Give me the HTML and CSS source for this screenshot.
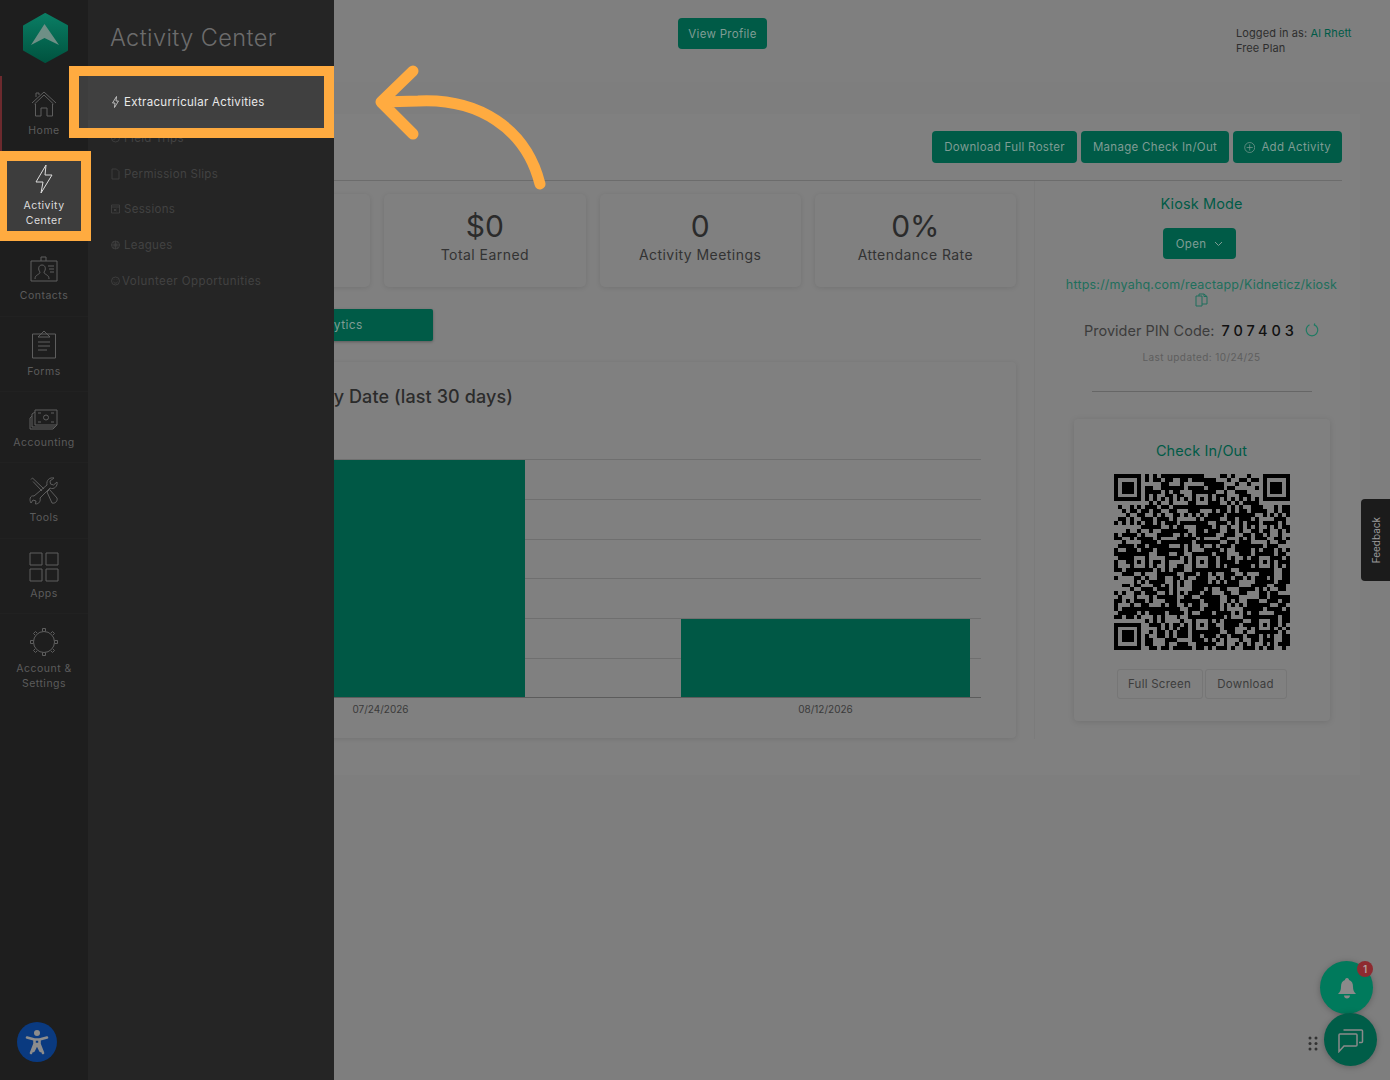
FILE: index.html
```html
<!DOCTYPE html>
<html lang="en">
<head>
    <meta charset="UTF-8">
    <meta name="viewport" content="width=device-width, initial-scale=1.0">
    <title>Activity Center</title>
    <link rel="stylesheet" href="styles.css">
</head>
<body>
    <div class="rail">
        <div class="logo">
            <svg width="46" height="50" viewBox="0 0 46 50">
                <defs>
                    <linearGradient id="logoFill" x1="0" y1="0" x2="0" y2="1">
                        <stop offset="0" stop-color="#0a7d64"/>
                        <stop offset="1" stop-color="#00533f"/>
                    </linearGradient>
                </defs>
                <path d="M23 1 L45 13 V37 L23 49 L2 37 V13 Z" fill="url(#logoFill)" stroke="url(#logoFill)" stroke-width="2" stroke-linejoin="round"/>
                <path d="M22.500 11 L37 32 L22.500 25 L9 32 Z" fill="#6f8f86"/>
            </svg>
        </div>
        <div class="rail-nav">
            <div class="rail-item home-item">
                <svg class="rail-icon" viewBox="0 0 30 30">
                    <path d="M3 14 L15 3 L27 14 M5.500 15 L15 6 L24.500 15 M7 8 V4 H10 V6"/>
                    <path d="M6.500 15 V27 H12 V19 H18 V27 H23.500 V15"/>
                </svg>
                <span>Home</span>
            </div>
            <div class="rail-item active">
                <svg class="rail-icon" viewBox="0 0 30 30">
                    <path d="M17 1 L7 18 H14 L12 29 L23 11 H16 Z"/>
                </svg>
                <span>Activity<br>Center</span>
            </div>
            <div class="rail-item">
                <svg class="rail-icon" viewBox="0 0 30 30">
                    <path d="M2 7 H28 V27 H2 Z M12 7 V3 H17 V7"/>
                    <path d="M6 25 C6 20 11 21 11 18 C9 16 9 11 13 11 C17 11 17 16 15 18 C15 21 20 20 20 25"/>
                    <path d="M19 12 H25 M20 15 H25 M21 18 H25"/>
                </svg>
                <span>Contacts</span>
            </div>
            <div class="rail-item">
                <svg class="rail-icon" viewBox="0 0 30 30">
                    <path d="M3.500 4 H26.500 V28 H3.500 Z"/>
                    <path d="M9 7 L12 4 L15 1 L18 4 L21 7 Z"/>
                    <path d="M9 12 H21 M9 16 H21 M9 20 H18"/>
                </svg>
                <span>Forms</span>
            </div>
            <div class="rail-item tight">
                <svg class="rail-icon" viewBox="0 0 30 30">
                    <path d="M6 6 H28 V21 H6 Z"/>
                    <circle cx="17" cy="13.500" r="2.500"/>
                    <path d="M9 9 H12 M22 9 H25 M9 18 H12 M22 18 H25"/>
                    <path d="M6 8 L3 10 V23 H26 L28 21 M3 12 L1 14 V25 H24 L26 23"/>
                </svg>
                <span>Accounting</span>
            </div>
            <div class="rail-item">
                <svg class="rail-icon" viewBox="0 0 30 30">
                    <path d="M2 3.500 L3.500 2 L15 13 M4 5.500 L13 15"/>
                    <path d="M18 16 L20.500 13.500 L28 22 C29 25 26 28 23 27 Z"/>
                    <path d="M25 2 C21 1 17 4 18 9 L5 20 C1 19 0 24 2 27 L4 24 L7 25 L6.500 28 C10 28 12 25 11 22 L21 12 C25 14 29 10 28 6 L24.500 9 L21.500 8 L21 5 Z"/>
                </svg>
                <span>Tools</span>
            </div>
            <div class="rail-item">
                <svg class="rail-icon" viewBox="0 0 30 30">
                    <path d="M1 1 H13 V13 H1 Z M17 1 H29 V13 H17 Z M1 17 H13 V29 H1 Z M17 17 H29 V29 H17 Z"/>
                </svg>
                <span>Apps</span>
            </div>
            <div class="rail-item">
                <svg class="rail-icon" viewBox="0 0 30 30">
                    <circle cx="15" cy="15" r="10.500"/>
                    <path d="M13.500 4.500 V1.500 H16.500 V4.500 M13.500 25.500 V28.500 H16.500 V25.500 M4.500 13.500 H1.500 V16.500 H4.500 M25.500 13.500 H28.500 V16.500 H25.500"/>
                    <path d="M6 8 L4.500 6.500 L6.500 4.500 L8 6 M24 8 L25.500 6.500 L23.500 4.500 L22 6 M6 22 L4.500 23.500 L6.500 25.500 L8 24 M24 22 L25.500 23.500 L23.500 25.500 L22 24"/>
                </svg>
                <span>Account &amp;<br>Settings</span>
            </div>
        </div>
    </div>

    <div class="main">
        <div class="header">
            <a class="btn profile-btn" href="#">View Profile</a>
            <div class="login">
                Logged in as: <a href="#">Al Rhett</a><br>
                Free Plan
            </div>
        </div>

        <div class="panel">
            <div class="toolbar">
                <a class="btn roster-btn" href="#">Download Full Roster</a>
                <a class="btn manage-btn" href="#">Manage Check In/Out</a>
                <a class="btn add-btn" href="#">
                    <svg width="13" height="13" viewBox="0 0 13 13">
                        <circle cx="6.500" cy="6.500" r="5.700"/>
                        <path d="M6.500 3 V10 M3 6.500 H10"/>
                    </svg>
                    Add Activity
                </a>
            </div>

            <div class="columns">
                <div class="left-col">
                    <div class="stats">
                        <div class="stat"><div class="stat-value">0</div><div class="stat-label">Total Participants</div></div>
                        <div class="stat"><div class="stat-value">$0</div><div class="stat-label">Total Earned</div></div>
                        <div class="stat"><div class="stat-value">0</div><div class="stat-label">Activity Meetings</div></div>
                        <div class="stat"><div class="stat-value">0%</div><div class="stat-label">Attendance Rate</div></div>
                    </div>

                    <div class="tabs">
                        <a class="tab" href="#">Analytics</a>
                    </div>

                    <div class="chart-card">
                        <h3>Attendance By Date (last 30 days)</h3>
                        <svg class="chart" width="847" height="275" viewBox="169 450 847 275">
                            <path class="grid-line" d="M200 459.500 H981 M200 499.500 H981 M200 539.500 H981 M200 578.500 H981 M200 618.500 H981 M200 658.500 H981"/>
                            <rect class="bar" x="236" y="460" width="289" height="237"/>
                            <rect class="bar" x="681" y="619" width="289" height="78"/>
                            <path class="axis-line" d="M200 697.500 H981"/>
                            <text x="380.500" y="713">07/24/2026</text>
                            <text x="825.500" y="713">08/12/2026</text>
                        </svg>
                    </div>
                </div>

                <div class="right-col">
                    <div class="green-title">Kiosk Mode</div>
                    <a class="btn open-btn" href="#">
                        Open
                        <svg width="9" height="6" viewBox="0 0 9 6"><path d="M1 1 L4.500 4.500 L8 1"/></svg>
                    </a>
                    <a class="kiosk-url" href="#">https://myahq.com/reactapp/Kidneticz/kiosk</a>
                    <svg class="copy-icon" width="13" height="14" viewBox="0 0 13 14">
                        <path d="M1 3 H7 V13 H1 Z M4 3 V1 H9 L12 3.500 V11 H7 M9 1 V3.500 H12"/>
                    </svg>
                    <div class="pin-row">
                        <span>Provider PIN Code:</span>
                        <span class="pin">707403</span>
                        <svg width="14" height="14" viewBox="0 0 14 14">
                            <path d="M4.500 1.800 A5.800 5.800 0 1 0 9.500 1.800 M9.800 0.500 L9.300 2 L11 3"/>
                        </svg>
                    </div>
                    <div class="updated">Last updated: 10/24/25</div>
                    <div class="divider"></div>

                    <div class="qr-card">
                        <div class="green-title">Check In/Out</div>
                        <svg class="qr" width="176" height="176" viewBox="0 0 45 45" shape-rendering="crispEdges">
                            <path id="qrPath" fill="#000"/>
                        </svg>
                        <div class="qr-actions">
                            <a class="plain-btn full-btn" href="#">Full Screen</a>
                            <a class="plain-btn dl-btn" href="#">Download</a>
                        </div>
                    </div>
                </div>
            </div>
        </div>
    </div>

    <!-- slide out menu -->
    <div class="side-panel">
        <div class="side-title">Activity Center</div>
        <div class="side-list">
            <div class="side-item active">
                <svg viewBox="0 0 10 12"><path d="M6 0.500 L2 7 H4.500 L4 11.500 L8 5 H5.500 Z"/></svg>
                Extracurricular Activities
            </div>
            <div class="side-item">
                <svg viewBox="0 0 10 12"><circle cx="5" cy="6" r="4"/><path d="M3 8 L7 4"/></svg>
                Field Trips
            </div>
            <div class="side-item">
                <svg viewBox="0 0 10 12"><path d="M1.500 1 H6 L8.500 3.500 V11 H1.500 Z"/></svg>
                Permission Slips
            </div>
            <div class="side-item">
                <svg viewBox="0 0 10 12"><path d="M1 2 H9 V10 H1 Z M1 4 H9 M4 6 V8 M4 7 L6 6 M4 7 L6 8"/></svg>
                Sessions
            </div>
            <div class="side-item">
                <svg viewBox="0 0 10 12"><circle cx="5" cy="6" r="4"/><path d="M1 6 H9 M5 2 V10 M3 2.500 C4 5 4 7 3 9.500 M7 2.500 C6 5 6 7 7 9.500"/></svg>
                Leagues
            </div>
            <div class="side-item volunteer">
                <svg viewBox="0 0 10 12"><circle cx="5" cy="6" r="4"/><path d="M3 7 C4 8.500 6 8.500 7 7 M3.500 4.500 V5 M6.500 4.500 V5"/></svg>
                Volunteer Opportunities
            </div>
        </div>
    </div>

    <div class="rail-marker"></div>
    <div class="access-btn">
        <svg width="26" height="28" viewBox="0 0 26 28">
            <circle cx="13" cy="5" r="3" fill="#8c8c8c" stroke="none"/>
            <path d="M3 9.500 L10.500 11.500 V16 L7 25 M23 9.500 L15.500 11.500 V16 L19 25 M10.500 11.500 H15.500 M10.500 16 H15.500 M13 16 L9.500 23 M13 16 L16.500 23"/>
        </svg>
    </div>

    <div class="feedback"><span>Feedback</span></div>

    <div class="fab bell-fab">
        <svg width="20" height="22" viewBox="0 0 20 22">
            <path d="M10 1 C11.500 1 12 2 12 3 C15 4 16 6.500 16 10 C16 13 17 15 19 17 H1 C3 15 4 13 4 10 C4 6.500 5 4 8 3 C8 2 8.500 1 10 1 Z M7 18.500 H13 C13 20.500 11.500 21.500 10 21.500 C8.500 21.500 7 20.500 7 18.500 Z" fill="#8a8a8a"/>
        </svg>
        <span class="fab-badge">1</span>
    </div>
    <div class="fab chat-fab">
        <svg width="26" height="26" viewBox="0 0 26 26">
            <path d="M1 8 Q1 7 2 7 H18 Q19 7 19 8 V18 Q19 19 18 19 H6 L1 24.500 Z"/>
            <path d="M5.500 3 H23.500 Q24.500 3 24.500 4 V14.500 Q24.500 15.500 23.500 15.500 H21"/>
        </svg>
    </div>
    <svg class="drag-dots" width="10" height="15" viewBox="0 0 10 15">
        <circle cx="2" cy="2" r="1.500"/><circle cx="8" cy="2" r="1.500"/>
        <circle cx="2" cy="7.500" r="1.500"/><circle cx="8" cy="7.500" r="1.500"/>
        <circle cx="2" cy="13" r="1.500"/><circle cx="8" cy="13" r="1.500"/>
    </svg>

    <!-- tutorial annotations -->
    <div class="callout callout-rail"></div>
    <div class="callout callout-menu"></div>
    <svg class="callout-arrow" width="190" height="140" viewBox="360 60 190 140">
        <path d="M540 184 C526 128 478 98 418 101 L381 102 M413 71 L381 102 L413 134"/>
    </svg>

    <script>
        // fills the qr grid: fixed patterns first, then a seeded fill for the data area
        var size = 45;
        var cells = [];
        var fixed = [];
        for (var r = 0; r < size; r++) {
            cells.push([]);
            fixed.push([]);
        }

        function setCell(r, c, on) {
            if (r < 0 || c < 0 || r >= size || c >= size) return;
            cells[r][c] = on;
            fixed[r][c] = true;
        }

        function finder(top, left) {
            for (var r = -1; r <= 7; r++) {
                for (var c = -1; c <= 7; c++) {
                    var ring = r >= 0 && r <= 6 && (c === 0 || c === 6) || c >= 0 && c <= 6 && (r === 0 || r === 6);
                    var core = r >= 2 && r <= 4 && c >= 2 && c <= 4;
                    setCell(top + r, left + c, ring || core);
                }
            }
        }

        function alignment(r0, c0) {
            for (var r = -2; r <= 2; r++) {
                for (var c = -2; c <= 2; c++) {
                    setCell(r0 + r, c0 + c, Math.max(Math.abs(r), Math.abs(c)) !== 1);
                }
            }
        }

        finder(0, 0);
        finder(0, 38);
        finder(38, 0);
        var centers = [6, 22, 38];
        for (var i = 0; i < 3; i++) {
            for (var j = 0; j < 3; j++) {
                if ((i === 0 && j === 0) || (i === 0 && j === 2) || (i === 2 && j === 0)) continue;
                alignment(centers[i], centers[j]);
            }
        }
        for (var t = 8; t < 37; t++) {
            if (!fixed[6][t]) setCell(6, t, t % 2 === 0);
            if (!fixed[t][6]) setCell(t, 6, t % 2 === 0);
        }

        var seed = 707403;
        function next() {
            seed = (seed * 1103515245 + 12345) & 0x7fffffff;
            return (seed >> 12) / 524288;
        }

        var d = '';
        for (var row = 0; row < size; row++) {
            for (var col = 0; col < size; col++) {
                var on = fixed[row][col] ? cells[row][col] : next() % 1 < 0.54;
                cells[row][col] = on;
                if (on) d += 'M' + col + ' ' + row + 'h1v1h-1z';
            }
        }
        document.getElementById('qrPath').setAttribute('d', d);
    </script>
</body>
</html>
```
FILE: styles.css
```css
* {
    box-sizing: border-box;
}
html, body {
    height: 100%;
}
body {
    margin: 0;
    height: 1080px;
    overflow: hidden;
    display: flex;
    position: relative;
    background-color: #7e7e7e;
    color: #333;
    font-family: Inter, "Liberation Sans", sans-serif;
    font-size: 12px;
}
a {
    text-decoration: none;
}

/* left rail */
.rail {
    flex: 0 0 88px;
    background-color: #1e1e1e;
}
.logo {
    height: 76px;
    padding: 13px 0 0 22px;
}
.logo svg {
    display: block;
}
.rail-nav {
    display: grid;
    grid-template-rows: 75px 90px 76px 75px 71px 76px 75px auto;
}
.rail-item {
    display: flex;
    flex-direction: column;
    align-items: center;
    padding-top: 13px;
    border-bottom: 1px solid #212121;
    color: #5c5c5c;
    font-size: 10.500px;
    letter-spacing: 0.500px;
    line-height: 15px;
    text-align: center;
}
.rail-item:last-child {
    border-bottom: none;
}
.rail-item.active {
    color: #d8d8d8;
}
.rail-item.tight {
    padding-top: 12px;
}
.rail-item.tight .rail-icon {
    margin-bottom: 1px;
}
.rail-icon {
    width: 30px;
    height: 30px;
    margin-bottom: 4px;
    fill: none;
    stroke: #5e5e5e;
    stroke-width: 1;
}
.rail-item.active .rail-icon {
    stroke: #d8d8d8;
}
.rail-marker {
    position: absolute;
    left: 0;
    top: 76px;
    width: 2px;
    height: 75px;
    background-color: #6d2a2e;
}
.access-btn {
    position: absolute;
    left: 17px;
    top: 1022px;
    width: 40px;
    height: 40px;
    border-radius: 50%;
    background-color: #0a3a80;
    display: flex;
    align-items: center;
    justify-content: center;
}
.access-btn svg {
    fill: none;
    stroke: #8c8c8c;
    stroke-width: 2.600;
    stroke-linecap: round;
}

/* slide out panel */
.side-panel {
    position: absolute;
    left: 88px;
    top: 0;
    width: 246px;
    height: 100%;
    background-color: #252525;
    padding-top: 23px;
}
.side-title {
    padding-left: 22px;
    color: #6c6c6c;
    font-size: 23.500px;
    font-weight: 300;
    letter-spacing: 0.400px;
    line-height: 30px;
}
.side-list {
    margin-top: 31px;
}
.side-item {
    height: 35.700px;
    padding-left: 22px;
    display: flex;
    align-items: center;
    gap: 3px;
    color: #424242;
    font-size: 11.500px;
    letter-spacing: 0.300px;
}
.side-item svg {
    width: 11px;
    height: 12px;
    flex: none;
    fill: none;
    stroke: #424242;
    stroke-width: 0.800;
}
.side-item.active {
    height: 44px;
    margin-top: -8px;
    padding-top: 8px;
    background-color: #212121;
    color: #e6e6e6;
}
.side-item.active svg {
    stroke: #cfcfcf;
}
.side-item.volunteer {
    gap: 1px;
    letter-spacing: 0.450px;
}

/* main page */
.main {
    flex: 1;
    min-width: 0;
}
.header {
    height: 82px;
    padding: 18px 39px 0 590px;
    display: flex;
    justify-content: space-between;
    align-items: flex-start;
    background-color: #7f7f7f;
}
.btn {
    display: inline-flex;
    align-items: center;
    justify-content: center;
    height: 32px;
    padding: 0 11px;
    border-radius: 4px;
    background-color: #005b47;
    color: #7f9c94;
    font-size: 11.500px;
    letter-spacing: 0.300px;
    white-space: nowrap;
}
.profile-btn {
    width: 89px;
    height: 31px;
}
.login {
    width: 115px;
    padding-top: 8px;
    color: #2e2e2e;
    font-size: 11px;
    letter-spacing: 0.100px;
    line-height: 15px;
    white-space: nowrap;
}
.login a {
    color: #005b47;
}
.panel {
    height: 661px;
    margin: 32px 30px 0 28px;
    padding: 17px 18px 0 53px;
    background-color: #808080;
}
.toolbar {
    display: flex;
    justify-content: flex-end;
    gap: 4px;
    height: 50px;
    border-bottom: 1px solid #6c6c6c;
}
.roster-btn {
    width: 145px;
}
.manage-btn {
    width: 148px;
}
.add-btn {
    width: 109px;
    gap: 6px;
}
.add-btn svg {
    fill: none;
    stroke: #7f9c94;
    stroke-width: 0.800;
}
.columns {
    display: flex;
    height: 558px;
}
.left-col {
    width: 866px;
    padding: 13px 18px 0 0;
    border-right: 1px solid #7b7b7b;
}
.stats {
    display: grid;
    grid-template-columns: repeat(4, 1fr);
    gap: 14px;
}
.stat {
    height: 93px;
    padding-top: 14px;
    border-radius: 5px;
    background-color: #808080;
    box-shadow: 0 1px 5px rgba(0, 0, 0, 0.1);
    text-align: center;
}
.stat-value {
    color: #2b2b2b;
    font-size: 30px;
    line-height: 36px;
}
.stat-label {
    margin-top: 2px;
    color: #333;
    font-size: 14px;
    letter-spacing: 0.450px;
    line-height: 18px;
}
.tabs {
    margin-top: 22px;
    padding-left: 66px;
}
.tab {
    display: flex;
    align-items: center;
    justify-content: center;
    width: 198px;
    height: 32px;
    padding: 0 0 1px 2px;
    border-radius: 2px;
    background-color: #005b47;
    color: #7f9c94;
    font-size: 12px;
    letter-spacing: 0.400px;
    box-shadow: 0 1px 3px rgba(0, 0, 0, 0.3);
}
.chart-card {
    height: 376px;
    margin-top: 21px;
    padding-top: 23px;
    border-radius: 4px;
    background-color: #808080;
    box-shadow: 0 1px 5px rgba(0, 0, 0, 0.1);
}
.chart-card h3 {
    margin: 0 503px 41px 0;
    color: #2b2b2b;
    font-size: 18px;
    font-weight: 500;
    letter-spacing: 0.100px;
    line-height: 24px;
    text-align: right;
    white-space: nowrap;
}
.chart {
    display: block;
}
.grid-line {
    fill: none;
    stroke: #6f6f6f;
}
.axis-line {
    fill: none;
    stroke: #5c5c5c;
}
.bar {
    fill: #005845;
}
.chart text {
    fill: #3a3a3a;
    font-size: 10px;
    text-anchor: middle;
}
.right-col {
    flex: 1;
    padding: 13px 0 0 26px;
    display: flex;
    flex-direction: column;
    align-items: center;
}
.green-title {
    color: #005b47;
    font-size: 14.500px;
    line-height: 20px;
    letter-spacing: 0.100px;
}
.open-btn {
    width: 73px;
    height: 31px;
    margin: 14px 4px 0 0;
    gap: 8px;
}
.open-btn svg {
    fill: none;
    stroke: #7f9c94;
}
.kiosk-url {
    margin-top: 18px;
    color: #1e6f5c;
    font-size: 12.500px;
    letter-spacing: 0.200px;
    line-height: 16px;
    white-space: nowrap;
}
.copy-icon {
    margin-top: 0;
    fill: none;
    stroke: #1e6f5c;
}
.pin-row {
    margin-top: 14px;
    height: 18px;
    display: flex;
    align-items: center;
    gap: 7px;
    color: #3c3c3c;
    font-size: 14.500px;
    white-space: nowrap;
}
.pin {
    color: #111;
    font-weight: 500;
    letter-spacing: 4px;
}
.pin-row svg {
    fill: none;
    stroke: #1e7a62;
    stroke-width: 1.200;
}
.updated {
    margin-top: 11px;
    color: #5e5e5e;
    font-size: 10px;
    letter-spacing: 0.400px;
    line-height: 14px;
}
.divider {
    width: 220px;
    height: 1px;
    margin-top: 27px;
    background-color: #666;
}
.qr-card {
    width: 256px;
    height: 302px;
    margin-top: 27px;
    padding-top: 22px;
    border-radius: 4px;
    background-color: #808080;
    box-shadow: 0 1px 6px rgba(0, 0, 0, 0.12);
    display: flex;
    flex-direction: column;
    align-items: center;
}
.qr {
    display: block;
    margin-top: 13px;
}
.qr-actions {
    display: flex;
    gap: 2px;
    margin-top: 19px;
}
.plain-btn {
    height: 30px;
    display: flex;
    align-items: center;
    justify-content: center;
    border: 1px solid #767676;
    border-radius: 3px;
    color: #3c3c3c;
    font-size: 11.500px;
    letter-spacing: 0.250px;
}
.full-btn {
    width: 86px;
}
.dl-btn {
    width: 82px;
}

/* floating widgets */
.feedback {
    position: absolute;
    right: 0;
    top: 499px;
    width: 29px;
    height: 82px;
    border-radius: 4px 0 0 4px;
    background-color: #1b1b1b;
    color: #9a9a9a;
    font-size: 10px;
    display: flex;
    align-items: center;
    justify-content: center;
}
.feedback span {
    writing-mode: vertical-rl;
    transform: rotate(180deg);
}
.fab {
    position: absolute;
    width: 53px;
    height: 53px;
    border-radius: 50%;
    display: flex;
    align-items: center;
    justify-content: center;
    box-shadow: 0 1px 6px rgba(0, 0, 0, 0.25);
}
.bell-fab {
    left: 1320px;
    top: 961px;
    background-color: #007a5c;
}
.chat-fab {
    left: 1324px;
    top: 1013px;
    background-color: #005d48;
}
.chat-fab svg {
    fill: none;
    stroke: #8a8a8a;
    stroke-width: 1.500;
}
.fab-badge {
    position: absolute;
    left: 37px;
    top: 0;
    width: 16px;
    height: 16px;
    border-radius: 50%;
    background-color: #8e2a30;
    color: #b0a0a0;
    font-size: 10px;
    font-weight: 600;
    line-height: 16px;
    text-align: center;
}
.drag-dots {
    position: absolute;
    left: 1308px;
    top: 1036px;
    fill: #333;
}

/* orange tutorial marks */
.callout {
    position: absolute;
    border: 10px solid #ffab40;
    background-color: rgba(255, 255, 255, 0.14);
}
.callout-rail {
    left: 0;
    top: 151px;
    width: 91px;
    height: 90px;
    border-left-width: 7px;
}
.callout-menu {
    left: 69px;
    top: 66px;
    width: 265px;
    height: 72px;
}
.callout-arrow {
    position: absolute;
    left: 360px;
    top: 60px;
    fill: none;
    stroke: #ffab40;
    stroke-width: 11;
    stroke-linecap: round;
    stroke-linejoin: round;
}
```
